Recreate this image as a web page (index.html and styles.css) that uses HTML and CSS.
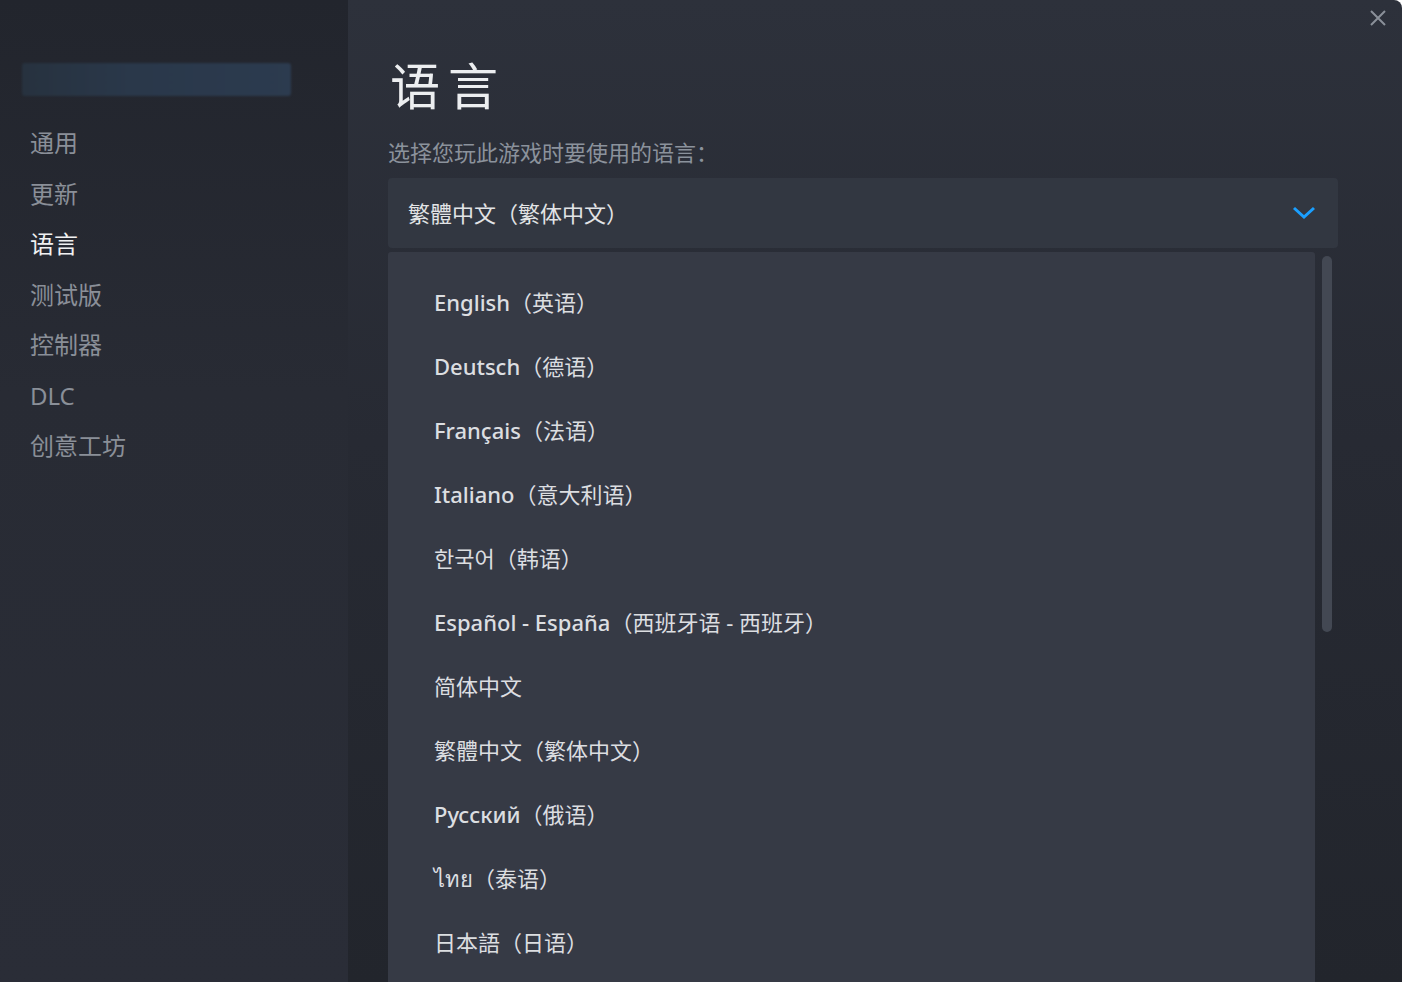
FILE: index.html
```html
<!DOCTYPE html>
<html lang="zh-CN">
<head>
	<meta charset="UTF-8">
	<title>属性 - 语言</title>
	<link rel="stylesheet" href="styles.css">
</head>
<body>
	<div class="window">
		<div class="sidebar">
			<div class="game-name"></div>
			<ul class="nav">
				<li>通用</li>
				<li>更新</li>
				<li class="active">语言</li>
				<li>测试版</li>
				<li>控制器</li>
				<li>DLC</li>
				<li>创意工坊</li>
			</ul>
		</div>
		<div class="main">
			<div class="close">
				<svg width="18" height="18" viewBox="0 0 18 18"><path d="M2 2L16 16M16 2L2 16" stroke="#8a9099" stroke-width="2" fill="none"/></svg>
			</div>
			<h1>语言</h1>
			<p class="hint">选择您玩此游戏时要使用的语言：</p>
			<div class="select">
				<span>繁體中文（繁体中文）</span>
				<svg width="24" height="14" viewBox="0 0 24 14"><path d="M2 2L12 11L22 2" stroke="#1a9fff" stroke-width="3" fill="none"/></svg>
			</div>
			<div class="dropdown">
				<ul class="options">
					<li><b>English</b>（英语）</li>
					<li><b>Deutsch</b>（德语）</li>
					<li><b>Français</b>（法语）</li>
					<li><b>Italiano</b>（意大利语）</li>
					<li lang="ko">한국어（韩语）</li>
					<li><b>Español - España</b>（西班牙语 - 西班牙）</li>
					<li>简体中文</li>
					<li>繁體中文（繁体中文）</li>
					<li><b>Русский</b>（俄语）</li>
					<li><b>ไทย</b>（泰语）</li>
					<li>日本語（日语）</li>
				</ul>
				<div class="scrollbar"><div class="thumb"></div></div>
			</div>
		</div>
	</div>
</body>
</html>
```

FILE: styles.css
```css
html, body {
	margin: 0;
	height: 100%;
	background: #ffffff;
}
body {
	font-family: "Noto Sans", "Noto Sans CJK SC", sans-serif;
	overflow: hidden;
}
.window {
	display: flex;
	height: 982px;
	border-top-right-radius: 8px;
	overflow: hidden;
}
.sidebar {
	width: 348px;
	flex-shrink: 0;
	background: linear-gradient(to bottom, #22252d 0%, #282b34 40%, #2a2d37 100%);
	padding-top: 63px;
	box-sizing: border-box;
}
.game-name {
	margin-left: 22px;
	width: 269px;
	height: 33px;
	border-radius: 3px;
	background: linear-gradient(to right, #27323f, #2a384a 40%, #2c3b4f);
	filter: blur(1px);
}
.nav {
	list-style: none;
	margin: 22px 0 0 0;
	padding: 0 0 0 30px;
}
.nav li {
	font-size: 24px;
	line-height: 50.5px;
	height: 50.5px;
	color: #8a8f98;
}
.nav li.active {
	color: #f0f1f2;
}
.main {
	flex: 1;
	position: relative;
	padding: 50px 0 0 40px;
	background: linear-gradient(to bottom, #2d313b 0%, #272a33 45%, #22252c 100%);
}
.close {
	position: absolute;
	top: 9px;
	right: 15px;
}
h1 {
	margin: 0 0 0 2px;
	font-size: 50px;
	font-weight: 400;
	letter-spacing: 8px;
	line-height: 72px;
	color: #eceef0;
}
.hint {
	margin: 15px 0 0 0;
	font-size: 22px;
	line-height: 30px;
	color: #8b929c;
}
.select {
	margin-top: 11px;
	width: 950px;
	height: 70px;
	box-sizing: border-box;
	padding: 0 22px 0 20px;
	display: flex;
	align-items: center;
	justify-content: space-between;
	background: #323741;
	border-radius: 4px;
	font-size: 22px;
	color: #e2e4e6;
}
.select span {
	margin-top: -2px;
}
.dropdown {
	display: flex;
	margin-top: 4px;
	height: 740px;
}
.options {
	list-style: none;
	margin: 0;
	padding: 18px 0 0 46px;
	width: 927px;
	box-sizing: border-box;
	background: #363a45;
	border-radius: 3px 3px 0 0;
}
.options li {
	height: 64px;
	line-height: 64px;
	font-size: 22px;
	color: #dcdee1;
}
.options b {
	font-weight: 500;
}
.scrollbar {
	margin-left: 7px;
	padding-top: 4px;
}
.thumb {
	width: 10px;
	height: 376px;
	border-radius: 5px;
	background: #434853;
}
```
